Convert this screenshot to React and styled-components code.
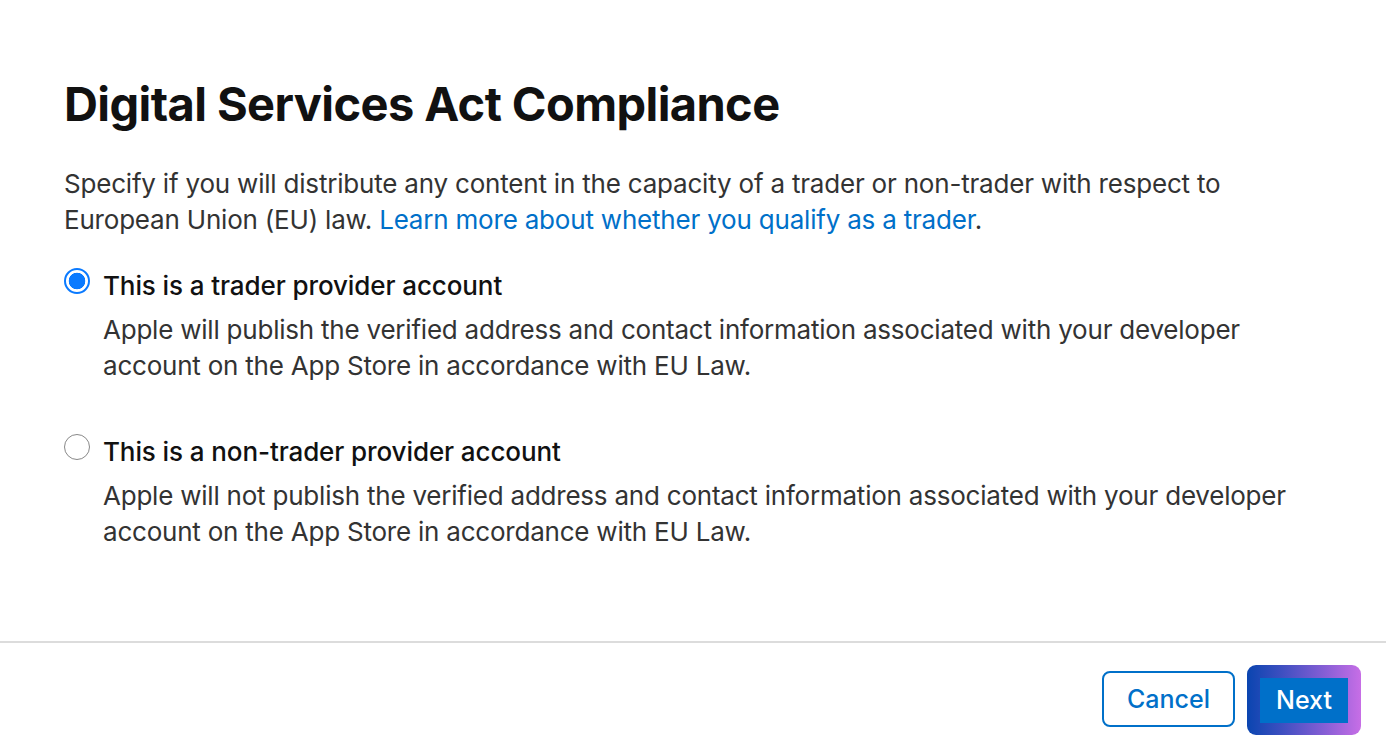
import React, { useState } from "react";
import styled, { createGlobalStyle } from "styled-components";

const Global = createGlobalStyle`
  html, body { margin: 0; padding: 0; background: #fff; }
  body { font-family: Inter, "Noto Sans", sans-serif; -webkit-font-smoothing: antialiased; }
`;

const Page = styled.div`
  width: 1386px;
  height: 748px;
  display: flex;
  flex-direction: column;
  box-sizing: border-box;
  overflow: hidden;
`;

const Body = styled.div`
  flex: 1;
  padding: 76px 64px 0 64px;
  display: flex;
  flex-direction: column;
`;

const Title = styled.h1`
  margin: 0;
  font-size: 47px;
  line-height: 56px;
  font-weight: 700;
  color: #111;
  letter-spacing: -0.6px;
`;

const Intro = styled.p`
  margin: 34px 0 0 0;
  font-size: 26px;
  line-height: 36px;
  color: #333;
  letter-spacing: -0.2px;
`;

const Link = styled.a`
  color: #0070c9;
  text-decoration: none;
`;

const Options = styled.div`
  display: flex;
  flex-direction: column;
  gap: 52px;
  margin-top: 32px;
`;

const Option = styled.label`
  display: grid;
  grid-template-columns: 26px 1fr;
  column-gap: 13px;
  cursor: pointer;
`;

const Radio = styled.span`
  width: 26px;
  height: 26px;
  box-sizing: border-box;
  border-radius: 50%;
  margin-top: -2px;
  border: ${(p) => (p.$checked ? "2px solid #0a7aff" : "1.5px solid #888")};
  background: ${(p) => (p.$checked ? "radial-gradient(circle, #0a7aff 0 8px, #fff 8.6px)" : "#fff")};
`;

const OptionLabel = styled.div`
  font-size: 26px;
  line-height: 32px;
  font-weight: 500;
  color: #111;
  letter-spacing: -0.1px;
`;

const OptionDesc = styled.div`
  grid-column: 2;
  margin-top: 10px;
  font-size: 26px;
  line-height: 36px;
  color: #333;
  letter-spacing: -0.22px;
`;

const Footer = styled.div`
  border-top: 2px solid #dcdcdc;
  height: 107px;
  flex: none;
  box-sizing: border-box;
  display: flex;
  justify-content: flex-end;
  align-items: flex-start;
  gap: 12px;
  padding: 22px 25px 0 0;
`;

const Button = styled.button`
  font-family: Inter, "Noto Sans", sans-serif;
  font-size: 25px;
  font-weight: 500;
  cursor: pointer;
`;

const CancelButton = styled(Button)`
  height: 56px;
  width: 133px;
  border: 2px solid #0070c9;
  border-radius: 8px;
  background: #fff;
  color: #0070c9;
  margin-top: 6px;
`;

const NextFrame = styled.div`
  width: 114px;
  height: 70px;
  border-radius: 9px;
  background: linear-gradient(90deg, #0a45b0 0%, #3d4fc0 30%, #8a5fd6 70%, #c76ee6 100%);
  display: flex;
  align-items: center;
  justify-content: center;
`;

const NextButton = styled(Button)`
  width: 88px;
  height: 45px;
  border: none;
  border-radius: 0;
  background: #0070c9;
  color: #fff;
`;

export default function App() {
  const [choice, setChoice] = useState("trader");
  const options = [
    {
      id: "trader",
      label: "This is a trader provider account",
      desc: "Apple will publish the verified address and contact information associated with your developer account on the App Store in accordance with EU Law.",
    },
    {
      id: "non",
      label: "This is a non-trader provider account",
      desc: "Apple will not publish the verified address and contact information associated with your developer account on the App Store in accordance with EU Law.",
    },
  ];
  return (
    <Page>
      <Global />
      <Body>
        <Title>Digital Services Act Compliance</Title>
        <Intro>
          Specify if you will distribute any content in the capacity of a trader or non-trader with respect to
          European Union (EU) law. <Link href="#">Learn more about whether you qualify as a trader</Link>.
        </Intro>
        <Options>
          {options.map((o) => (
            <Option key={o.id} onClick={() => setChoice(o.id)}>
              <Radio $checked={choice === o.id} />
              <OptionLabel>{o.label}</OptionLabel>
              <OptionDesc>{o.desc}</OptionDesc>
            </Option>
          ))}
        </Options>
      </Body>
      <Footer>
        <CancelButton>Cancel</CancelButton>
        <NextFrame>
          <NextButton>Next</NextButton>
        </NextFrame>
      </Footer>
    </Page>
  );
}
